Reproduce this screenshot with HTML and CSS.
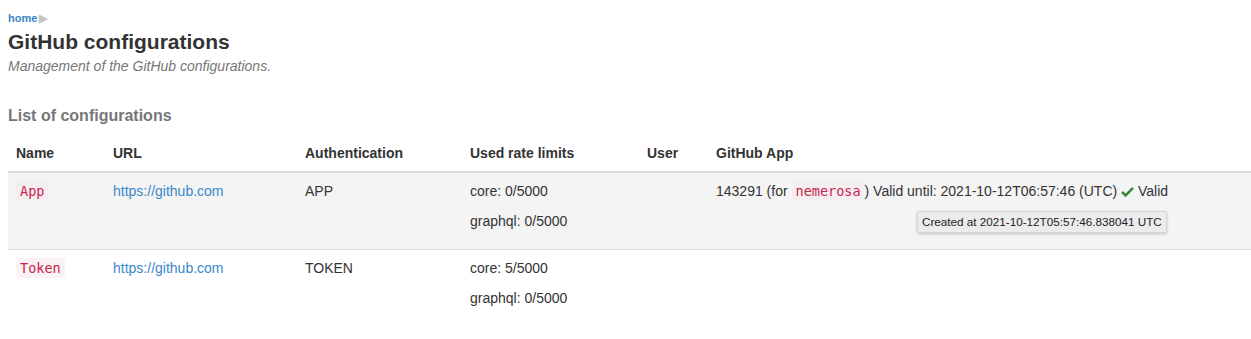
FILE: index.html
```html
<!DOCTYPE html>
<html>
<head>
<meta charset="utf-8">
<link rel="stylesheet" href="styles.css">
</head>
<body>
<div class="page">
  <nav class="breadcrumb"><a href="#">home</a><span class="sep">&#9654;</span></nav>
  <h1 class="title">GitHub configurations</h1>
  <p class="subtitle">Management of the GitHub configurations.</p>
  <h2 class="section">List of configurations</h2>
  <table class="configs">
    <colgroup>
      <col class="c-name"><col class="c-url"><col class="c-auth"><col class="c-rate"><col class="c-user"><col class="c-app">
    </colgroup>
    <thead>
      <tr><th>Name</th><th>URL</th><th>Authentication</th><th>Used rate limits</th><th>User</th><th>GitHub App</th></tr>
    </thead>
    <tbody>
      <tr class="striped">
        <td><code>App</code></td>
        <td><a href="#">https://github.com</a></td>
        <td>APP</td>
        <td><p>core: 0/5000</p><p>graphql: 0/5000</p></td>
        <td></td>
        <td class="app-cell">
          <p>143291 (for <code>nemerosa</code>) Valid until: 2021-10-12T06:57:46 (UTC) <span class="ok"><svg width="13" height="11" viewBox="0 0 13 11"><path d="M1 6 L4.6 9.4 L12 1.8" fill="none" stroke="#3b8a3e" stroke-width="2.6"/></svg></span> Valid</p>
          <div class="tooltip">Created at 2021-10-12T05:57:46.838041 UTC</div>
        </td>
      </tr>
      <tr>
        <td><code>Token</code></td>
        <td><a href="#">https://github.com</a></td>
        <td>TOKEN</td>
        <td><p>core: 5/5000</p><p>graphql: 0/5000</p></td>
        <td></td>
        <td></td>
      </tr>
    </tbody>
  </table>
</div>
</body>
</html>
```
FILE: styles.css
```css
html, body {
  margin: 0;
  padding: 0;
  background: #fff;
}
body {
  font-family: "Liberation Sans", Arial, sans-serif;
  font-size: 14px;
  line-height: 20px;
  color: #333;
}
.page {
  padding: 10px 0 0 8px;
}
.breadcrumb {
  font-size: 11px;
  line-height: 16px;
  font-weight: bold;
}
.breadcrumb a {
  color: #3a87c9;
  text-decoration: none;
}
.breadcrumb .sep {
  color: #c4c4c4;
  font-size: 11px;
  margin-left: 2px;
}
.title {
  margin: 4px 0 0 0;
  font-size: 21px;
  line-height: 24px;
  font-weight: bold;
  color: #333;
}
.subtitle {
  margin: 4px 0 0 0;
  font-size: 14px;
  line-height: 16px;
  font-style: italic;
  color: #777;
}
.section {
  margin: 33px 0 0 0;
  font-size: 16px;
  line-height: 18px;
  font-weight: bold;
  color: #777;
}
.configs {
  margin-top: 10px;
  width: 1243px;
  border-collapse: collapse;
  border-spacing: 0;
}
.c-name { width: 97px; }
.c-url { width: 192px; }
.c-auth { width: 165px; }
.c-rate { width: 177px; }
.c-user { width: 69px; }
.configs th {
  text-align: left;
  font-weight: bold;
  padding: 8px;
  border-bottom: 2px solid #dddddd;
  vertical-align: bottom;
}
.configs td {
  padding: 8px;
  vertical-align: top;
  border-top: 1px solid #dddddd;
}
.configs tbody tr:first-child td {
  border-top: 0;
}
.configs tr.striped td {
  background: #f4f4f4;
}
.configs p {
  margin: 0 0 10px 0;
}
.configs a {
  color: #3a87c9;
  text-decoration: none;
}
code {
  font-family: "DejaVu Sans Mono", Menlo, monospace;
  font-size: 13.5px;
  color: #c7254e;
  background: #f9f2f4;
  padding: 2px 4px;
  border-radius: 4px;
}
.configs tr.striped code {
  background: #f4eef0;
}
.app-cell {
  position: relative;
}
.ok svg {
  vertical-align: -1px;
}
.tooltip {
  position: absolute;
  left: 209px;
  top: 38px;
  height: 20px;
  padding: 0 4px;
  font-size: 11.7px;
  line-height: 20px;
  color: #222;
  background: #ececec;
  border: 1px solid #d6d6d6;
  border-radius: 2px;
  box-shadow: 0 1px 3px rgba(0,0,0,0.2);
  white-space: nowrap;
}
```
